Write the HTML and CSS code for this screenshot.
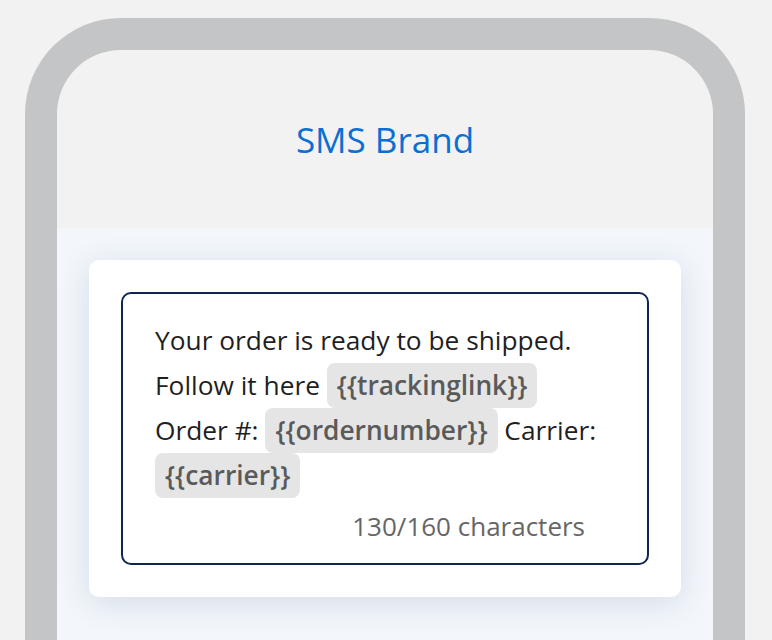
FILE: index.html
```html
<!DOCTYPE html>
<html lang="en">
<head>
    <meta charset="UTF-8">
    <meta name="viewport" content="width=device-width, initial-scale=1.0">
    <title>SMS Preview</title>
    <link rel="stylesheet" href="styles.css">
</head>
<body>
    <div class="phone">
        <header class="phone-header">
            <h1>SMS Brand</h1>
        </header>

        <main class="phone-body">
            <section class="sms-card">
                <div class="sms-box">
                    <p class="sms-text">
                        Your order is ready to be shipped.<br>
                        Follow it here <span class="tag">{{trackinglink}}</span><br>
                        Order #: <span class="tag">{{ordernumber}}</span> Carrier: <span class="tag">{{carrier}}</span>
                    </p>
                    <div class="sms-count">130/160 characters</div>
                </div>
            </section>
        </main>
    </div>
</body>
</html>
```

FILE: styles.css
```css
/* Estilo geral */
body {
    font-family: "Open Sans", Lato, sans-serif;
    margin: 0;
    padding: 0;
    background-color: #f2f2f2;
    color: #1f1f1f;
    overflow: hidden;
}

.phone {
    margin: 18px 0 0 25px;
    width: 656px;
    height: 700px;
    border: 32px solid #c4c5c6;
    border-bottom: none;
    border-radius: 96px 96px 0 0;
    background-color: #f2f2f2;
    overflow: hidden;
}

.phone-header {
    height: 178px;
    display: flex;
    align-items: center;
    justify-content: center;
}

.phone-header h1 {
    margin: 0;
    font-size: 35px;
    font-weight: 400;
    color: #0a6fd3;
}

.phone-body {
    background-color: #f3f7fc;
    padding: 32px;
    height: 100%;
}

.sms-card {
    background-color: #fff;
    border-radius: 10px;
    padding: 32px;
    box-shadow: 0 6px 32px rgba(30, 60, 100, 0.14);
}

.sms-box {
    border: 2px solid #0f2650;
    border-radius: 10px;
    padding: 24px 32px 14px;
}

.sms-text {
    margin: 0;
    font-size: 26.3px;
    line-height: 45px;
}

.tag {
    display: inline-block;
    background-color: #e5e5e5;
    color: #5a5a5a;
    font-weight: 600;
    padding: 0 10px;
    border-radius: 8px;
}

.sms-count {
    margin-top: 6px;
    padding-right: 30px;
    text-align: right;
    font-size: 26px;
    line-height: 45px;
    color: #666;
}
```
